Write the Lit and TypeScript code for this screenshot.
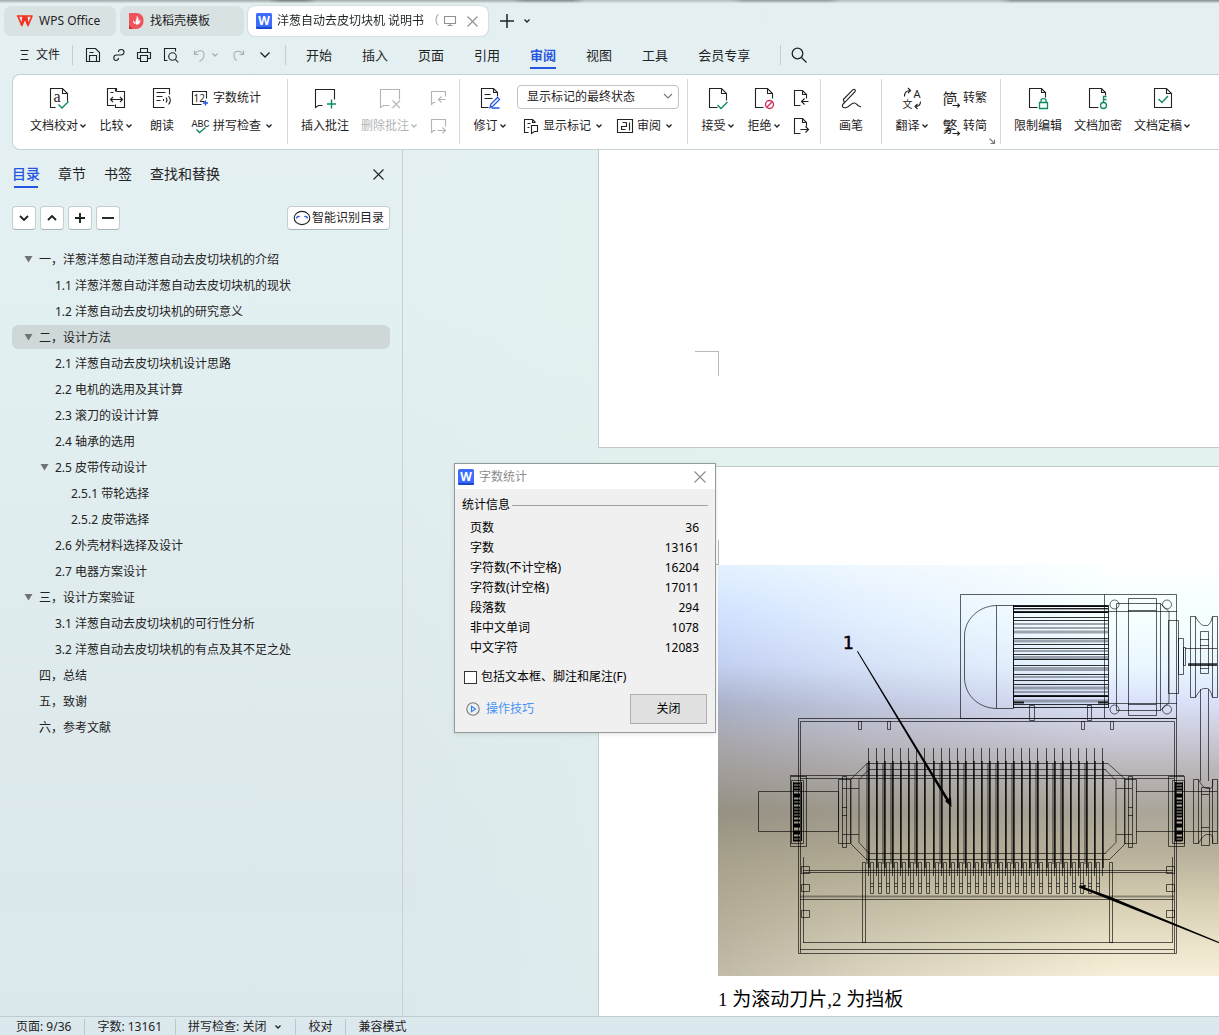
import { LitElement, html, css, svg, nothing, type TemplateResult } from "lit";
import { customElement, property } from "lit/decorators.js";
import { classMap } from "lit/directives/class-map.js";

/* ---------- icons ---------- */

/* Whole-number coordinates land on pixel centres when the view box starts half a pixel early. */
const draw = (w: number, h: number, origin: number, body: unknown) => html`<svg class="icon" width=${w} height=${h}
  viewBox="${origin} ${origin} ${w} ${h}" fill="none" stroke="currentColor" stroke-width="1.1" aria-hidden="true">${body}</svg>`;
const icon = (w: number, h: number, body: unknown) => draw(w, h, -0.5, body);
const solid = (w: number, h: number, body: unknown) => draw(w, h, 0, body);

const GREEN = "#0f8a60";
const BLUE = "#2456e0";
const RED = "#d2305a";

const caret = solid(8, 6, svg`<path d="M1.500 1.500 4 4 6.500 1.500" stroke-width="1.300"/>`);
const cross = (s: number) => solid(s, s, svg`<path d="M.5.5l${s - 1} ${s - 1}M${s - 0.5}.5l-${s - 1} ${s - 1}"/>`);

const writerLogo = solid(16, 16, svg`<rect width="16" height="16" rx="1.500" fill="#3d6bff" stroke="none"/>
  <path d="M0 14h16v.5a1.500 1.500 0 0 1-1.500 1.500h-13A1.500 1.500 0 0 1 0 14.500z" fill="#1746c8" stroke="none"/>
  <text x="8" y="12" text-anchor="middle" font-size="12" font-weight="700" fill="#fff" stroke="none">W</text>`);

const I = {
  wps: solid(18, 14, svg`<path d="M.8 2h6.600L5.800 11.500 2 2M5.800 11.500 9 4l3 7.500L16 2h-5.500l1.500 9.500M9 4 8 2h4" stroke="#f5301e" stroke-width="1.700" stroke-linejoin="round"/>`),
  docer: solid(16, 16, svg`<path d="M0 0h8a7 7 0 0 1 6.500 8A7.500 7.500 0 0 1 7 16H0z" fill="#f0545a" stroke="none"/>
    <path d="M0 12.500 4 16H0z" fill="#c9302c" stroke="none"/>
    <path d="M7.500 11.500c-2-3 1-5 .5-8 2 2 1 4 .5 5.500 1-.5 1.500-1.500 2.500-2 0 3-1 4.500-3.500 4.500zM6 11C4.500 10 4.500 9 4.500 8 5.500 8.500 6 9.500 6 11z" fill="#fff" stroke="#fff" stroke-width=".6"/>`),
  monitor: icon(12, 12, svg`<path d="M0 1h11v7H0zM3 10h5M5.500 8v2"/>`),
  plus: solid(14, 14, svg`<path d="M7 0v14M0 7h14" stroke-width="1.500"/>`),
  menu: icon(10, 12, svg`<path d="M1 1h8M2 5h6M1 10h8"/>`),
  save: icon(16, 16, svg`<path d="M1 1h9l4 4v9H1zM4 14V8h7v6M4 5h4"/>`),
  link: icon(13, 14, svg`<path d="M6 3.500C6 .2 11.500.2 11.500 3.500 11.500 5.500 10 6.500 8 6.500H4C.5 6.500.5 12 3.500 12 5 12 6 11 6 9.500"/>`),
  print: icon(16, 16, svg`<path d="M4 5V1h7v4M4 11H1V5h13v6h-3M4 8h7v6H4z"/>`),
  preview: icon(16, 16, svg`<path d="M4 13H1V1h11v3"/><circle cx="9" cy="9" r="3.800"/><path d="m11.800 11.800 3 3"/>`),
  undo: icon(12, 13, svg`<path d="M1 1v4h4M1 5C4 0 11 0 10.500 5.500c0 3-2 5-4.500 6.500"/>`),
  redo: icon(12, 13, svg`<path d="M10 1v4H6M10 5C7 0 0 1 .5 6c0 3 1 4 2.500 5"/>`),
  chevron: solid(12, 8, svg`<path d="m1.500 1.500 4.500 4.500 4.500-4.500" stroke-width="1.300"/>`),
  search: solid(16, 16, svg`<circle cx="6.500" cy="6.500" r="5.300" stroke-width="1.300"/><path d="m10.500 10.500 5 5" stroke-width="1.300"/>`),
  proof: icon(20, 24, svg`<path d="M6 21H1V2h12l5 5v8M13 2v5h5"/><text x="4" y="15" font-family="Liberation Serif, serif" font-size="16" fill="currentColor" stroke="none">a</text><path d="m9 18 3.500 3.500L19 15" stroke=${GREEN} stroke-width="1.400"/>`),
  compare: icon(20, 24, svg`<path d="M8 19H1V2h9v3M4 6h3M10 5h8v16H9v-3M9 5V2"/><path d="M4 13h12M6.500 10.500 4 13l2.500 2.500M13.500 10.500 16 13l-2.500 2.500"/>`),
  read: icon(20, 24, svg`<path d="M12 21H1V2h16v6M4 6h9M4 10h6M4 14h4"/><path d="M11 12.500v2M13.500 11c1.200 1.500 1.200 3.500 0 5M16 9.500c2.200 2.500 2.200 6 0 8.500"/>`),
  count: icon(18, 16, svg`<path d="M10 14H1V1h14v7"/><text x="2" y="11" font-size="10" fill="currentColor" stroke="none">12</text><path d="M14 10v5M11.500 12.500h5" stroke=${BLUE} stroke-width="1.400"/>`),
  spell: icon(18, 16, svg`<text x="0" y="8" font-size="10" fill="currentColor" stroke="none" font-family="Liberation Mono, monospace">ABC</text><path d="m5 11 3 3 6-5" stroke=${GREEN} stroke-width="1.400"/>`),
  comment: icon(24, 24, svg`<path d="M9 19H5l-3 2V3h19v10"/><path d="M18 13v9M13.500 17.500h9" stroke=${GREEN} stroke-width="1.400"/>`),
  delComment: icon(24, 24, svg`<path d="M11 19H5l-3 2V3h19v10M14 14l7.500 7.500M21.500 14 14 21.500"/>`),
  prevComment: icon(16, 16, svg`<path d="M5 12H3l-2 2V1h14v5M15 9H8M11 6 8 9l3 3"/>`),
  nextComment: icon(16, 16, svg`<path d="M5 12H3l-2 2V1h14v7M7 12h8M12 9l3 3-3 3"/>`),
  revise: icon(20, 24, svg`<path d="M8 21H1V2h12l4 4v4M13 2v4h4M4 8h6M4 12h8"/><path d="M9.500 21 10.500 17.500l6.500-6.500 2 2-6.500 6.500zM11 21.500h8" stroke=${BLUE} stroke-width="1.300"/>`),
  markup: icon(16, 16, svg`<path d="M5 14H1V1h8l3 3M9 1v3h3M4 5h3M4 9h2"/><path d="M8 7h6v6h-3l-3 2z"/>`),
  pane: icon(16, 16, svg`<path d="M0 1h15v13H0zM12 4v8M9 4H5M9 4v4H4v3h4"/>`),
  accept: icon(20, 24, svg`<path d="M9 21H1V2h12l5 5v7M13 2v5h5"/><path d="m9 18.500 3.500 3.500L19 15.500" stroke=${GREEN} stroke-width="1.400"/>`),
  reject: icon(20, 24, svg`<path d="M9 21H1V2h12l5 5v5M13 2v5h5"/><g stroke=${RED} stroke-width="1.400"><circle cx="15" cy="18" r="4"/><path d="m12.300 20.700 5.400-5.400"/></g>`),
  prevChange: icon(16, 18, svg`<path d="M7 16H1V1h8l4 4v4M9 1v4h4M15 12H8M11 9l-3 3 3 3"/>`),
  nextChange: icon(16, 18, svg`<path d="M7 16H1V1h8l4 4v4M9 1v4h4M7 12h8M12 9l3 3-3 3"/>`),
  pen: icon(22, 24, svg`<path d="M4 17 2.800 13 12.500 3.200c1-1 2.800 0 2.200 1.700L6 14.200 3 17c-2 2-1.500 4.500 2 4.200 4.500-.5 5-5 9-4.700 2.500.2 2 3 6.500 4"/>`),
  translate: icon(20, 24, svg`<path d="M2 10C2 6 4 4 8 4M5.500 1.500 8 4 5.500 6.500M18 15c0 3.500-2 5-5.500 5M15 17.500 12.500 20l2.500 2.500"/>
    <g fill="currentColor" stroke="none"><text x="11" y="11" font-size="11">A</text><text x="0" y="21" font-size="10">文</text></g>`),
  lock: icon(20, 24, svg`<path d="M9 21H1V2h12l4 4v5M13 2v4h4"/><path d="M11 16h8v6h-8zM12.500 16v-2c0-2.600 5-2.600 5 0v2" stroke=${GREEN} stroke-width="1.300"/>`),
  key: icon(20, 24, svg`<path d="M10 21H1V2h12l4 4v3M13 2v4h4"/><g stroke=${GREEN} stroke-width="1.300"><circle cx="15" cy="19" r="3"/><path d="M15 16v-6h3M15 13h3"/></g>`),
  final: icon(20, 24, svg`<path d="M1 2h12l5 5v14H1zM13 2v5h5"/><path d="m5 12.500 3.500 3.500 6-6.500" stroke=${GREEN} stroke-width="1.400"/>`),
  launcher: icon(7, 7, svg`<path d="m0 0 5 5M5 1v4H1"/>`),
  face: solid(18, 16, svg`<ellipse cx="9" cy="8" rx="7.800" ry="6.600"/><path d="M3.500 8.500c.5-1.800 1.800-2.500 3.200-1.800M14.500 8.500c-.5-1.800-1.800-2.500-3.200-1.800" stroke=${BLUE} stroke-width="1.300"/>`),
  play: solid(14, 14, svg`<circle cx="7" cy="7" r="6.200" stroke="#7a7a7a"/><path d="M5.500 4.200v5.600L9.500 7z" stroke="#2b83f6"/>`),
  down: solid(12, 12, svg`<path d="m2 4 4 4 4-4" stroke-width="1.900"/>`),
  up: solid(12, 12, svg`<path d="m2 8 4-4 4 4" stroke-width="1.900"/>`),
  add: solid(12, 12, svg`<path d="M6 1v10M1 6h10" stroke-width="1.900"/>`),
  minus: solid(12, 12, svg`<path d="M0 6h12" stroke-width="1.900"/>`),
};

/* ---------- machine drawing ---------- */

const box = (x: number, y: number, w: number, h: number) => `M${x} ${y}h${w}v${h}h${-w}z`;
const hline = (y: number, x1: number, x2: number) => `M${x1} ${y}H${x2}`;
const vline = (x: number, y1: number, y2: number) => `M${x} ${y1}V${y2}`;

const PITCH = 8.07;
const blades = Array.from({ length: 30 }, (_, i) => Math.round(150 + i * PITCH));
const teeth = Array.from({ length: 29 }, (_, i) => Math.round(152 + i * PITCH) + 0.5);

const bladeTips = blades.map((x) => vline(x + 0.5, 183, 311)).join("");
const bladeBodies = blades.map((x) => vline(x + 1, 196, 303)).join("");
const bladeShades = blades.filter((_, i) => i % 3 === 0 || i % 7 === 2).map((x) => vline(x - 1, 198, 299)).join("");
const teethPath = teeth.map((x) => box(x, 297.5, 3, 31) + hline(318.5, x, x + 3) + hline(321.5, x, x + 3)).join("");

const finDark = [41.5, 43.5, 47.5, 52.5, 55.5, 73.5, 79.5, 83.5, 89.5, 94.5, 100.5, 109.5, 115.5, 119.5, 131.5, 139.5, 142.5];
const finGrey = [[44, 2], [59, 2], [63, 2], [67, 3], [76, 3], [86, 2], [93, 4], [104, 4], [112, 2], [123, 3], [127, 2], [136, 3]];
const bearing = (x: number) =>
  [218, 221, 224, 229, 231, 235, 238, 242, 245, 248, 251, 255, 259, 261, 266, 268, 272, 275].map((y) => hline(y + 0.5, x, x + 7)).join("");

const pulley = (x1: number, x2: number, y1: number, y2: number) =>
  box(x1, y1, 5, y2 - y1) + box(x2, y1, 5, y2 - y1) +
  `M${x1 + 5} ${y1}q4 8 8 9h4q3 -1 ${x2 - x1 - 17} -9M${x1 + 5} ${y2}q4 -8 8 -9h4q3 1 ${x2 - x1 - 17} 9`;

const structure = [
  box(242.5, 29.5, 216, 124), vline(386.5, 29.5, 153.5),
  "M278.500 40.500C260 41 246.500 55 246.500 71V112C246.500 130 260 143 278.500 143.500",
  box(278.5, 40.5, 17, 103),
  box(398.5, 38.5, 44, 107), box(410.5, 33.5, 28, 117), hline(45.5, 410, 438), hline(139.5, 410, 438),
  "M442.500 38.500 451 46.500V137.500L442.500 145.500",
  hline(46.5, 390, 459), hline(138.5, 390, 459),
  box(450.5, 55.5, 10, 73), box(460.5, 73.5, 5, 36), box(465.5, 82.5, 2, 18),
  hline(83.5, 467, 499), hline(98.5, 470, 499),
  pulley(472.5, 494.5, 51.5, 132.5), box(482.5, 66.5, 8, 42),
  hline(74.5, 482, 491), hline(80.5, 482, 491), hline(103.5, 482, 491),
  vline(482.5, 124, 216), vline(490.5, 124, 216),
  box(80.5, 153.5, 378, 235), "M82.500 388V156.500H456.500V388",
  box(311.5, 140.5, 5, 15), box(369.5, 140.5, 4, 15),
  box(140.5, 156.5, 3, 8), box(169.5, 156.5, 3, 8), box(363.5, 156.5, 3, 8), box(392.5, 156.5, 3, 8),
  hline(198.5, 149, 390), hline(204.5, 151, 388), hline(288.5, 151, 388), hline(294.5, 148, 391),
  "M149 198.500 133 214V279L149 295M151 204.500 141 214.500V277.500L151 288.500",
  "M390 198.500 407 214V279L391 295M387 204.500 398 215.500V277.500L387 288.500",
  hline(210.5, 72, 466), hline(213.5, 82, 456),
  box(120.5, 214.5, 12, 64), box(124.5, 211.5, 4, 71), box(406.5, 214.5, 12, 64), box(410.5, 211.5, 4, 71),
  hline(223.5, 124, 141), hline(269.5, 124, 141), hline(223.5, 398, 414), hline(269.5, 398, 414),
  hline(242.5, 124, 129), hline(250.5, 124, 129), hline(242.5, 410, 415), hline(250.5, 410, 415),
  box(40.5, 226.5, 80, 40), hline(226.5, 418, 499), hline(266.5, 418, 499),
  box(72.5, 211.5, 16, 70), box(73.5, 215.5, 12, 63), box(450.5, 211.5, 16, 70), box(454.5, 215.5, 12, 63),
  pulley(475.5, 494.5, 214.5, 278.5), box(483.5, 222.5, 8, 58), hline(229.5, 483, 491), hline(262.5, 483, 491),
  hline(305.5, 85, 455), hline(307.5, 85, 455), hline(334.5, 82, 456),
  box(144.5, 297.5, 3, 80), box(391.5, 297.5, 3, 80),
  hline(377.5, 85, 454), hline(384.5, 82, 456), vline(85.5, 292, 378), vline(454.5, 292, 378),
  ...[301.5, 319.5, 345.5].flatMap((y) => [box(83.5, y, 8, 7), box(448.5, y, 8, 7)]),
].join("");

const column = (id: string, stops: [number, string][]) => svg`<linearGradient id=${id} x2="0" y2="1">
  ${stops.map(([o, c]) => svg`<stop offset=${o} stop-color=${c}/>`)}</linearGradient>`;

const drawing = html`<svg class="drawing" viewBox="0 0 501 411" width="501" height="411" role="img" aria-label="洋葱自动去皮切块机">
  <defs>
    ${column("left", [[0, "#e3f2ff"], [0.12, "#d2e2ff"], [0.24, "#c4d0f2"], [0.34, "#aab2c8"], [0.42, "#a9a8b0"], [0.5, "#a29e9b"], [0.6, "#969183"], [0.72, "#a8a28c"], [0.85, "#b4ad98"], [1, "#c1bba8"]])}
    ${column("right", [[0, "#fdffff"], [0.14, "#f4ffff"], [0.25, "#e9f6ff"], [0.33, "#dae2fb"], [0.41, "#cdccdc"], [0.5, "#bab5b8"], [0.6, "#aaa598"], [0.7, "#b8b09a"], [0.82, "#d5ceb2"], [0.92, "#eae3ca"], [1, "#f7efd8"]])}
    <linearGradient id="sweep"><stop offset="0" stop-color="#000"/><stop offset=".3" stop-color="#777"/><stop offset=".8" stop-color="#fff"/></linearGradient>
    <mask id="fade"><rect width="501" height="411" fill="url(#sweep)"/></mask>
  </defs>
  <rect width="501" height="411" fill="url(#left)"/>
  <rect width="501" height="411" fill="url(#right)" mask="url(#fade)"/>
  <g fill="none" stroke="#000">
    <g stroke="#59616b" stroke-opacity=".55">${finGrey.map(([y, h]) => svg`<path d="M295 ${y}H390" stroke-width=${h}/>`)}</g>
    <path d=${finDark.map((y) => hline(y, 295, 390)).join("") + vline(295.5, 40, 143) + vline(390.5, 40, 143)} stroke-opacity=".8"/>
    <path d="M295 41H390M295 47H390M295 131H390M296 137.500h10M380 137.500h10" stroke-width="2" stroke-opacity=".85"/>
    <path d=${structure} stroke-opacity=".62"/>
    <path d="M82 331.500H456" stroke-width="2" stroke-opacity=".35"/>
    <g stroke-opacity=".6"><circle cx="396.500" cy="39.500" r="4.500"/><circle cx="449" cy="39.500" r="4.500"/><circle cx="396.500" cy="144.500" r="4.500"/><circle cx="449" cy="144.500" r="4.500"/></g>
    <path d=${bladeTips} stroke-opacity=".65"/>
    <path d=${bladeBodies} stroke-width="1.500" stroke-opacity=".85"/>
    <path d=${bladeShades} stroke-width="2" stroke-opacity=".35"/>
    <path d=${teethPath} stroke-opacity=".6"/>
    <path d=${bearing(75) + bearing(457)} stroke-width="1.800"/>
    <path d=${vline(75.5, 217, 276) + vline(83.5, 217, 276) + vline(457.5, 217, 276) + vline(464.5, 217, 276)}/>
    <path d="M470 100H499" stroke-width="1.500"/>
  </g>
  <path d="M139 86.500 139.800 86 233 238 231 240zM227 236l6-4 .5 10zM501 377v1.200L361 322.500 361.800 320.500 393 332zM361 321l7-1-1.500 5z"/>
  <text x="125" y="84" class="callout">1</text>
</svg>`;

/* ---------- data ---------- */

interface Entry { text: string; level: number; open?: boolean; selected?: boolean }

const OUTLINE: Entry[] = [
  { text: "一，洋葱洋葱自动洋葱自动去皮切块机的介绍", level: 0, open: true },
  { text: "1.1 洋葱洋葱自动洋葱自动去皮切块机的现状", level: 1 },
  { text: "1.2 洋葱自动去皮切块机的研究意义", level: 1 },
  { text: "二，设计方法", level: 0, open: true, selected: true },
  { text: "2.1 洋葱自动去皮切块机设计思路", level: 1 },
  { text: "2.2 电机的选用及其计算", level: 1 },
  { text: "2.3 滚刀的设计计算", level: 1 },
  { text: "2.4 轴承的选用", level: 1 },
  { text: "2.5 皮带传动设计", level: 1, open: true },
  { text: "2.5.1 带轮选择", level: 2 },
  { text: "2.5.2 皮带选择", level: 2 },
  { text: "2.6 外壳材料选择及设计", level: 1 },
  { text: "2.7 电器方案设计", level: 1 },
  { text: "三，设计方案验证", level: 0, open: true },
  { text: "3.1 洋葱自动去皮切块机的可行性分析", level: 1 },
  { text: "3.2 洋葱自动去皮切块机的有点及其不足之处", level: 1 },
  { text: "四，总结", level: 0 },
  { text: "五，致谢", level: 0 },
  { text: "六，参考文献", level: 0 },
];

const STATS: [string, number][] = [
  ["页数", 36], ["字数", 13161], ["字符数(不计空格)", 16204], ["字符数(计空格)", 17011],
  ["段落数", 294], ["非中文单词", 1078], ["中文字符", 12083],
];

const base = css`
  * { box-sizing: border-box; }
  button, select { font: inherit; color: inherit; background: none; border: 0; padding: 0; margin: 0; }
  .icon { display: block; flex: none; overflow: visible; }
`;

/* ---------- ribbon ---------- */

@customElement("ribbon-bar")
class RibbonBar extends LitElement {
  static styles = [base, css`
    :host { display: block; padding-left: 12px; flex: none; overflow: hidden; }
    .card {
      display: flex; height: 76px; padding: 4px 0 5px 4px; background: #fff; white-space: nowrap;
      border: 1px solid #c5d3d4; border-right: 0; border-radius: 8px 0 0 8px;
    }
    .group { display: flex; flex: none; gap: 12px; padding: 0 13px; border-right: 1px solid #d6d8d8; position: relative; }
    .group:first-child { padding-right: 14px; }
    .group:last-child { border-right: 0; }
    .track { gap: 10px; padding-right: 8px; }
    .changes { padding-right: 11px; }
    .big { display: flex; flex-direction: column; align-items: center; gap: 6px; min-width: 34px; padding-top: 7px; line-height: 20px; }
    .small { display: flex; align-items: center; gap: 4px; height: 20px; }
    .label { display: flex; align-items: center; gap: 1px; }
    .small .label { gap: 4px; }
    .stack { display: flex; flex-direction: column; gap: 8px; padding-top: 9px; }
    .tools { display: flex; flex-direction: column; gap: 7px; padding-top: 6px; }
    .row { display: flex; gap: 14px; padding-left: 6px; }
    .off { color: #b2b5b6; }
    .field { position: relative; display: flex; width: 162px; }
    .field select { appearance: none; width: 100%; height: 24px; padding: 0 24px 0 9px; border: 1px solid #bfc3c4; border-radius: 4px; background: #fff; }
    .field .icon { position: absolute; right: 6px; top: 8px; color: #777; pointer-events: none; }
    .glyph { width: 18px; font-size: 15px; line-height: 18px; position: relative; display: block; }
    .arrow { position: absolute; right: -1px; bottom: -1px; background: #fff; display: block; }
    .launch { position: absolute; right: 4px; bottom: -1px; color: #777; }
  `];

  private big(ic: TemplateResult, text: string, menu = false, off = false) {
    return html`<button class=${classMap({ big: true, off })}>${ic}<span class="label">${text}${menu ? caret : nothing}</span></button>`;
  }
  private small(ic: unknown, text: string, menu = false) {
    return html`<button class="small">${ic}<span class="label">${text}${menu ? caret : nothing}</span></button>`;
  }
  private only(ic: TemplateResult, name: string, off = false) {
    return html`<button class=${classMap({ small: true, off })} aria-label=${name}>${ic}</button>`;
  }
  private glyph(ch: string) {
    return html`<span class="glyph">${ch}<span class="arrow">${icon(8, 6, svg`<path d="M0 3h7M5 1l2 2-2 2"/>`)}</span></span>`;
  }

  render() {
    return html`<div class="card" role="toolbar" aria-label="审阅">
      <div class="group">
        ${this.big(I.proof, "文档校对", true)}${this.big(I.compare, "比较", true)}${this.big(I.read, "朗读")}
        <div class="stack">${this.small(I.count, "字数统计")}${this.small(I.spell, "拼写检查", true)}</div>
      </div>
      <div class="group">
        ${this.big(I.comment, "插入批注")}${this.big(I.delComment, "删除批注", true, true)}
        <div class="stack">${this.only(I.prevComment, "上一条批注", true)}${this.only(I.nextComment, "下一条批注", true)}</div>
      </div>
      <div class="group track">
        ${this.big(I.revise, "修订", true)}
        <div class="tools">
          <span class="field"><select aria-label="显示状态"><option>显示标记的最终状态</option></select>${solid(10, 7, svg`<path d="m1 1 4 4 4-4"/>`)}</span>
          <div class="row">${this.small(I.markup, "显示标记", true)}${this.small(I.pane, "审阅", true)}</div>
        </div>
      </div>
      <div class="group changes">
        ${this.big(I.accept, "接受", true)}${this.big(I.reject, "拒绝", true)}
        <div class="stack">${this.only(I.prevChange, "上一条修订")}${this.only(I.nextChange, "下一条修订")}</div>
      </div>
      <div class="group">${this.big(I.pen, "画笔")}</div>
      <div class="group">
        ${this.big(I.translate, "翻译", true)}
        <div class="stack">${this.small(this.glyph("简"), "转繁")}${this.small(this.glyph("繁"), "转简")}</div>
        <button class="launch" aria-label="更多选项">${I.launcher}</button>
      </div>
      <div class="group">
        ${this.big(I.lock, "限制编辑")}${this.big(I.key, "文档加密")}${this.big(I.final, "文档定稿", true)}
      </div>
    </div>`;
  }
}

/* ---------- outline ---------- */

@customElement("outline-pane")
class OutlinePane extends LitElement {
  @property({ attribute: false }) entries: Entry[] = [];

  static styles = [base, css`
    :host { display: block; width: 403px; flex: none; border-right: 1px solid #cdd0d0; padding: 10px 12px 0; }
    .head { display: flex; align-items: center; gap: 18px; height: 28px; font-size: 14px; }
    .tab { line-height: 26px; height: 28px; position: relative; }
    .active { color: #2456e0; font-weight: 500; }
    .active::after { content: ""; position: absolute; left: 2px; right: 2px; bottom: 0; height: 2px; background: #2456e0; }
    .close { margin-left: auto; margin-right: 6px; }
    .tools { display: flex; gap: 4px; margin: 18px 0 17px; }
    .tool { display: flex; align-items: center; justify-content: center; gap: 1px; min-width: 24px; height: 24px; background: #fff; border: 1px solid #c3cecf; border-bottom-color: #a9b4b5; border-radius: 4px; }
    .smart { margin-left: auto; padding: 0 5px; }
    ul { list-style: none; margin: 0; padding: 0; display: flex; flex-direction: column; gap: 2px; }
    .item { display: flex; align-items: center; width: 100%; height: 24px; padding-top: 2px; border-radius: 6px; text-align: left; white-space: nowrap; }
    .selected { background: #ced8d8; }
    .mark { width: 27px; padding-left: 12px; flex: none; color: #6e7475; }
    .l1 { padding-left: 16px; }
    .l2 { padding-left: 32px; }
  `];

  render() {
    const fold = solid(10, 8, svg`<path d="M.5 0h8L4.500 6.500z" fill="currentColor" stroke="none"/>`);
    return html`
      <div class="head">
        <button class="tab active">目录</button><button class="tab">章节</button><button class="tab">书签</button><button class="tab">查找和替换</button>
        <button class="close" aria-label="关闭窗格">${cross(11)}</button>
      </div>
      <div class="tools">
        <button class="tool" aria-label="展开">${I.down}</button><button class="tool" aria-label="收起">${I.up}</button>
        <button class="tool" aria-label="增加">${I.add}</button><button class="tool" aria-label="减少">${I.minus}</button>
        <button class="tool smart">${I.face}智能识别目录</button>
      </div>
      <ul>${this.entries.map((e) => html`<li><button class=${classMap({ item: true, selected: !!e.selected, l1: e.level === 1, l2: e.level === 2 })}>
        <span class="mark">${e.open ? fold : nothing}</span>${e.text}</button></li>`)}</ul>`;
  }
}

/* ---------- word count dialog ---------- */

@customElement("count-dialog")
class CountDialog extends LitElement {
  @property({ attribute: false }) stats: [string, number][] = [];

  static styles = [base, css`
    :host { display: block; width: 262px; background: #f0f0f0; border: 1px solid #939a9a; color: #000; box-shadow: 0 1px 4px rgb(0 0 0 / 12%); }
    .bar { display: flex; align-items: center; gap: 5px; height: 25px; padding: 0 9px 0 3px; background: #fff; color: #8c8c8c; }
    .bar button { margin-left: auto; }
    fieldset { border: 0; margin: 0; padding: 6px 7px 0; }
    .legend { display: flex; align-items: center; gap: 2px; line-height: 20px; }
    .legend::after { content: ""; flex: 1; height: 1px; background: #a0a0a0; }
    table { width: 100%; border-collapse: collapse; margin-top: 3px; }
    th, td { height: 20px; line-height: 20px; padding: 0 9px 0 8px; font-weight: 400; text-align: left; }
    td { text-align: right; }
    .check { display: flex; align-items: center; gap: 4px; padding: 9px 9px 0; line-height: 20px; }
    .check input { appearance: none; width: 13px; height: 13px; margin: 0; border: 1px solid #333; background: #fff; }
    .foot { display: flex; align-items: center; justify-content: space-between; padding: 7px 8px 8px 11px; }
    .foot a { display: flex; align-items: center; gap: 6px; color: #4a95f5; text-decoration: none; }
    .foot button { width: 77px; height: 30px; background: #e1e1e1; border: 1px solid #adadad; }
  `];

  render() {
    return html`
      <div class="bar">${writerLogo}<span>字数统计</span><button aria-label="关闭">${cross(12)}</button></div>
      <fieldset aria-label="统计信息">
        <div class="legend">统计信息</div>
        <table>${this.stats.map(([k, v]) => html`<tr><th scope="row">${k}</th><td>${v}</td></tr>`)}</table>
      </fieldset>
      <label class="check"><input type="checkbox">包括文本框、脚注和尾注(F)</label>
      <div class="foot"><a href="#tips">${I.play}操作技巧</a><button>关闭</button></div>`;
  }
}

/* ---------- application ---------- */

@customElement("app-root")
class AppRoot extends LitElement {
  static styles = [base, css`
    :host {
      display: flex; flex-direction: column; height: 100vh; overflow: hidden; position: relative;
      font: 12px/20px "Noto Sans", "Noto Sans CJK SC", sans-serif; color: #1f2324;
      background: linear-gradient(#e4eff1, #e3f0f1 30%, #dde9eb 72%, #dbe8ed);
    }
    .edge { height: 6px; flex: none; background:
      linear-gradient(transparent, #e4eff1 60%),
      linear-gradient(90deg, #9fa6a7 22%, #6f7677 23% 25%, #a3aaab 26% 42%, #7e8586 43% 47%, #b3babb 48% 60%, #8e9596 61% 68%, #b3babb 69% 82%, #848b8c 83%); }
    .tabs { display: flex; align-items: center; gap: 4px; height: 30px; padding: 0 4px; flex: none; }
    .tab { display: flex; align-items: center; height: 30px; border-radius: 7px; background: #d9e2e3; white-space: nowrap; gap: 5px; }
    .home { width: 112px; padding-left: 12px; }
    .store { width: 124px; padding-left: 9px; }
    .current { width: 240px; padding: 0 10px 0 8px; background: #fff; box-shadow: 0 0 2px #a9b8ba; }
    .title { flex: 1; mask-image: linear-gradient(90deg, #000 88%, rgb(0 0 0 / 40%)); }
    .current .icon { color: #8b9091; }
    .current button { margin-left: 6px; }
    .new { margin-left: 8px; }
    .more { margin-left: 5px; }
    .menu { display: flex; align-items: center; height: 38px; flex: none; padding-left: 19px; white-space: nowrap; }
    .file { display: flex; align-items: center; gap: 7px; padding-right: 12px; }
    .quick { display: flex; align-items: center; gap: 11px; padding: 0 14px 0 12px; border: 1px solid #c3cdce; border-width: 0 1px; height: 20px; }
    .off { color: #a8b0b1; }
    .pair { display: flex; align-items: center; gap: 6px; margin: 0 3px; }
    .fold { margin-left: 3px; }
    nav { display: flex; gap: 30px; padding: 0 30px 0 20px; font-size: 13px; }
    nav a { color: inherit; text-decoration: none; line-height: 22px; padding: 3px 0 1px; border-bottom: 2px solid transparent; }
    nav .active { color: #2456e0; font-weight: 700; border-color: #2456e0; }
    .find { border-left: 1px solid #c3cdce; padding: 2px 0 2px 10px; }
    .body { display: flex; flex: 1; min-height: 0; }
    main { flex: 1; min-width: 0; padding-left: 195px; overflow: hidden; background: linear-gradient(90deg, rgb(255 255 255 / 0), rgb(229 243 240 / 50%) 40%); }
    .page { background: #fff; border: 1px solid #c3caca; border-right: 0; padding-left: 96px; }
    .first { height: 298px; border-top: 0; padding-top: 201px; margin-bottom: 18px; }
    .corner { width: 24px; height: 25px; border: 0 solid #b9b9b9; border-width: 1px 1px 0 0; }
    .lower { border-width: 0 1px 1px 0; }
    .second { height: 900px; padding-top: 73px; }
    .content { padding-left: 23px; }
    .drawing { display: block; flex: none; }
    .callout { font: 17px "DejaVu Sans", sans-serif; stroke: #000; stroke-width: .5px; }
    .caption { margin: 10px 0 0; font: 19px/28px "Liberation Serif", "Noto Sans CJK SC", serif; color: #000; white-space: nowrap; }
    footer { display: flex; align-items: flex-end; flex: none; border-top: 1px solid #bfcacd; padding: 2px 0 0 4px; white-space: nowrap; }
    footer button { display: flex; align-items: center; gap: 8px; padding: 0 13px 0 12px; line-height: 16px; border-right: 1px solid #bcc7ca; }
    footer button:last-child { border-right: 0; }
    count-dialog { position: absolute; left: 454px; top: 463px; }
  `];

  render() {
    return html`
      <div class="edge"></div>
      <div class="tabs">
        <button class="tab home">${I.wps}WPS Office</button>
        <button class="tab store">${I.docer}找稻壳模板</button>
        <div class="tab current">${writerLogo}<span class="title">洋葱自动去皮切块机 说明书 （</span>${I.monitor}<button aria-label="关闭标签">${cross(11)}</button></div>
        <button class="new" aria-label="新建">${I.plus}</button>
        <button class="more" aria-label="标签列表">${caret}</button>
      </div>
      <div class="menu">
        <button class="file">${I.menu}文件</button>
        <div class="quick">
          <button aria-label="保存">${I.save}</button><button aria-label="输出">${I.link}</button>
          <button aria-label="打印">${I.print}</button><button aria-label="打印预览">${I.preview}</button>
          <span class="pair off"><button aria-label="撤销">${I.undo}</button><button aria-label="撤销列表">${caret}</button></span>
          <button class="off" aria-label="恢复">${I.redo}</button><button class="fold" aria-label="自定义">${I.chevron}</button>
        </div>
        <nav>${["开始", "插入", "页面", "引用", "审阅", "视图", "工具", "会员专享"].map((t) =>
          html`<a href="#" class=${classMap({ active: t === "审阅" })}>${t}</a>`)}</nav>
        <button class="find" aria-label="搜索">${I.search}</button>
      </div>
      <ribbon-bar></ribbon-bar>
      <div class="body">
        <outline-pane .entries=${OUTLINE}></outline-pane>
        <main>
          <section class="page first"><div class="corner"></div></section>
          <section class="page second">
            <div class="corner lower"></div>
            <div class="content">${drawing}<p class="caption">1 为滚动刀片,2 为挡板</p></div>
          </section>
        </main>
      </div>
      <footer>
        <button>页面: 9/36</button><button>字数: 13161</button><button>拼写检查: 关闭${caret}</button><button>校对</button><button>兼容模式</button>
      </footer>
      <count-dialog .stats=${STATS}></count-dialog>`;
  }
}
